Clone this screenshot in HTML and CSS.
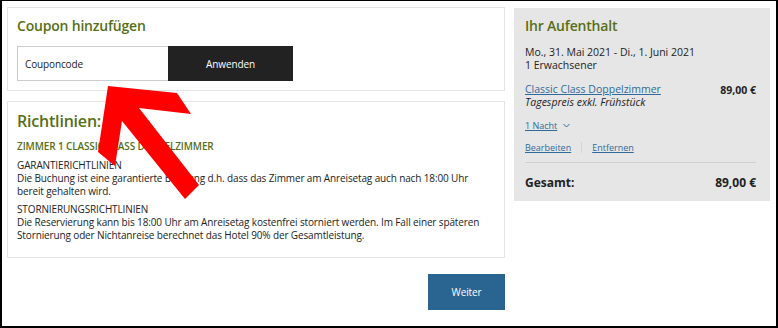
FILE: index.html
```html
<!DOCTYPE html>
<html lang="de">
<head>
  <meta charset="UTF-8" />
  <meta name="viewport" content="width=device-width, initial-scale=1" />
  <title>Buchung - Coupon</title>
  <link rel="stylesheet" href="styles.css">
</head>
<body>
  <div class="frame">
    <div class="main">
      <div class="card coupon">
        <h2>Coupon hinzufügen</h2>
        <div class="coupon-row">
          <input type="text" class="coupon-input" placeholder="Couponcode">
          <button class="apply">Anwenden</button>
        </div>
      </div>

      <div class="card rules">
        <h2>Richtlinien:</h2>
        <h4>ZIMMER 1 CLASSIC CLASS DOPPELZIMMER</h4>
        <div class="rule">
          <div class="rule-title">GARANTIERICHTLINIEN</div>
          <p>Die Buchung ist eine garantierte Buchung d.h. dass das Zimmer am Anreisetag auch nach 18:00 Uhr bereit gehalten wird.</p>
        </div>
        <div class="rule">
          <div class="rule-title">STORNIERUNGSRICHTLINIEN</div>
          <p>Die Reservierung kann bis 18:00 Uhr am Anreisetag kostenfrei storniert werden. Im Fall einer späteren Stornierung oder Nichtanreise berechnet das Hotel 90% der Gesamtleistung.</p>
        </div>
      </div>

      <div class="actions">
        <button class="next">Weiter</button>
      </div>
    </div>

    <div class="summary">
      <h2>Ihr Aufenthalt</h2>
      <p class="dates">Mo., 31. Mai 2021 - Di., 1. Juni 2021<br>1 Erwachsener</p>
      <div class="room">
        <div>
          <a href="#" class="link">Classic Class Doppelzimmer</a>
          <div class="rate">Tagespreis exkl. Frühstück</div>
        </div>
        <span class="price">89,00 €</span>
      </div>
      <a href="#" class="link nights">1 Nacht</a>
      <span class="chev">
        <svg width="7" height="5" viewBox="0 0 7 5"><path d="M0.5 1 L3.5 4 L6.5 1" fill="none" stroke="#2f6a9a" stroke-width="1"/></svg>
      </span>
      <div class="edit">
        <a href="#" class="link">Bearbeiten</a>
        <span class="sep"></span>
        <a href="#" class="link">Entfernen</a>
      </div>
      <div class="total">
        <span>Gesamt:</span>
        <span>89,00 €</span>
      </div>
    </div>

    <!-- annotation arrow -->
    <svg class="arrow" width="778" height="328" viewBox="0 0 778 328">
      <polygon fill="#ff0000" points="108,86 177,93 191,114 139,108 199,185 185,199 122,121 115,166 98,152"/>
    </svg>
  </div>
</body>
</html>
```

FILE: styles.css
```css
html, body {
  margin: 0;
  padding: 0;
}
body {
  font-family: "Open Sans", "DejaVu Sans", sans-serif;
  font-size: 10px;
  letter-spacing: -0.13px;
  color: #222;
  background: #fff;
}
.frame {
  position: relative;
  box-sizing: border-box;
  width: 778px;
  height: 328px;
  border: 2px solid #000;
  border-top-width: 1px;
  padding: 6px 6px 0 5px;
  display: flex;
  gap: 9px;
  align-items: flex-start;
}
.main {
  width: 498px;
  display: flex;
  flex-direction: column;
  gap: 10px;
}
.card {
  border: 1px solid #e4e4e4;
  background: #fff;
  padding: 0 9px;
}
h2 {
  margin: 0;
  color: #566f17;
  font-weight: 600;
  letter-spacing: -0.2px;
}
.coupon {
  height: 82px;
}
.coupon h2 {
  font-size: 14px;
  padding-top: 8px;
  line-height: 20px;
}
.coupon-row {
  display: flex;
  margin-top: 10px;
}
.coupon-input {
  box-sizing: border-box;
  width: 151px;
  height: 35px;
  border: 1px solid #ccc;
  border-right: none;
  padding: 0 7px;
  font-family: inherit;
  font-size: 10px;
  letter-spacing: inherit;
}
.coupon-input::placeholder {
  color: #222;
}
.apply {
  width: 125px;
  height: 35px;
  border: none;
  background: #222;
  color: #fff;
  font-family: inherit;
  font-size: 10px;
  letter-spacing: inherit;
}
.rules {
  height: 155px;
}
.rules h2 {
  font-size: 16px;
  line-height: 22px;
  padding-top: 8px;
}
.rules h4 {
  margin: 7px 0 6px;
  color: #566f17;
  font-size: 10px;
  font-weight: 600;
  line-height: 14px;
}
.rule {
  margin-bottom: 5px;
}
.rule-title, .rule p {
  line-height: 13px;
}
.rule p {
  margin: 0;
}
.actions {
  display: flex;
  justify-content: flex-end;
  padding-top: 6px;
}
.next {
  width: 77px;
  height: 36px;
  border: none;
  background: #2a6592;
  color: #fff;
  font-family: inherit;
  font-size: 10px;
  letter-spacing: inherit;
}
.summary {
  width: 256px;
  height: 193px;
  box-sizing: border-box;
  background: #e6e6e6;
  padding: 8px 14px 0 11px;
  margin-top: 1px;
  font-size: 10.5px;
  letter-spacing: 0;
}
.summary h2 {
  font-size: 14px;
  line-height: 20px;
}
.dates {
  margin: 10px 0 11px;
  line-height: 13px;
}
.room {
  display: flex;
  justify-content: space-between;
  line-height: 13px;
}
.link {
  color: #2f6a9a;
  text-decoration: underline;
}
.rate {
  font-style: italic;
}
.price {
  font-weight: 700;
  padding-top: 1px;
}
.nights {
  display: inline-block;
  margin-top: 10px;
  font-size: 9px;
}
.chev svg {
  margin-left: 3px;
  vertical-align: 1px;
}
.edit {
  display: flex;
  align-items: center;
  gap: 10px;
  margin-top: 9px;
  font-size: 9px;
  padding-bottom: 8px;
  border-bottom: 1px solid #d0d0d0;
}
.sep {
  width: 1px;
  height: 11px;
  background: #d6d6d6;
}
.total {
  display: flex;
  justify-content: space-between;
  font-size: 12px;
  font-weight: 700;
  margin-top: 11px;
}
.arrow {
  position: absolute;
  left: -2px;
  top: -1px;
  pointer-events: none;
}
```
